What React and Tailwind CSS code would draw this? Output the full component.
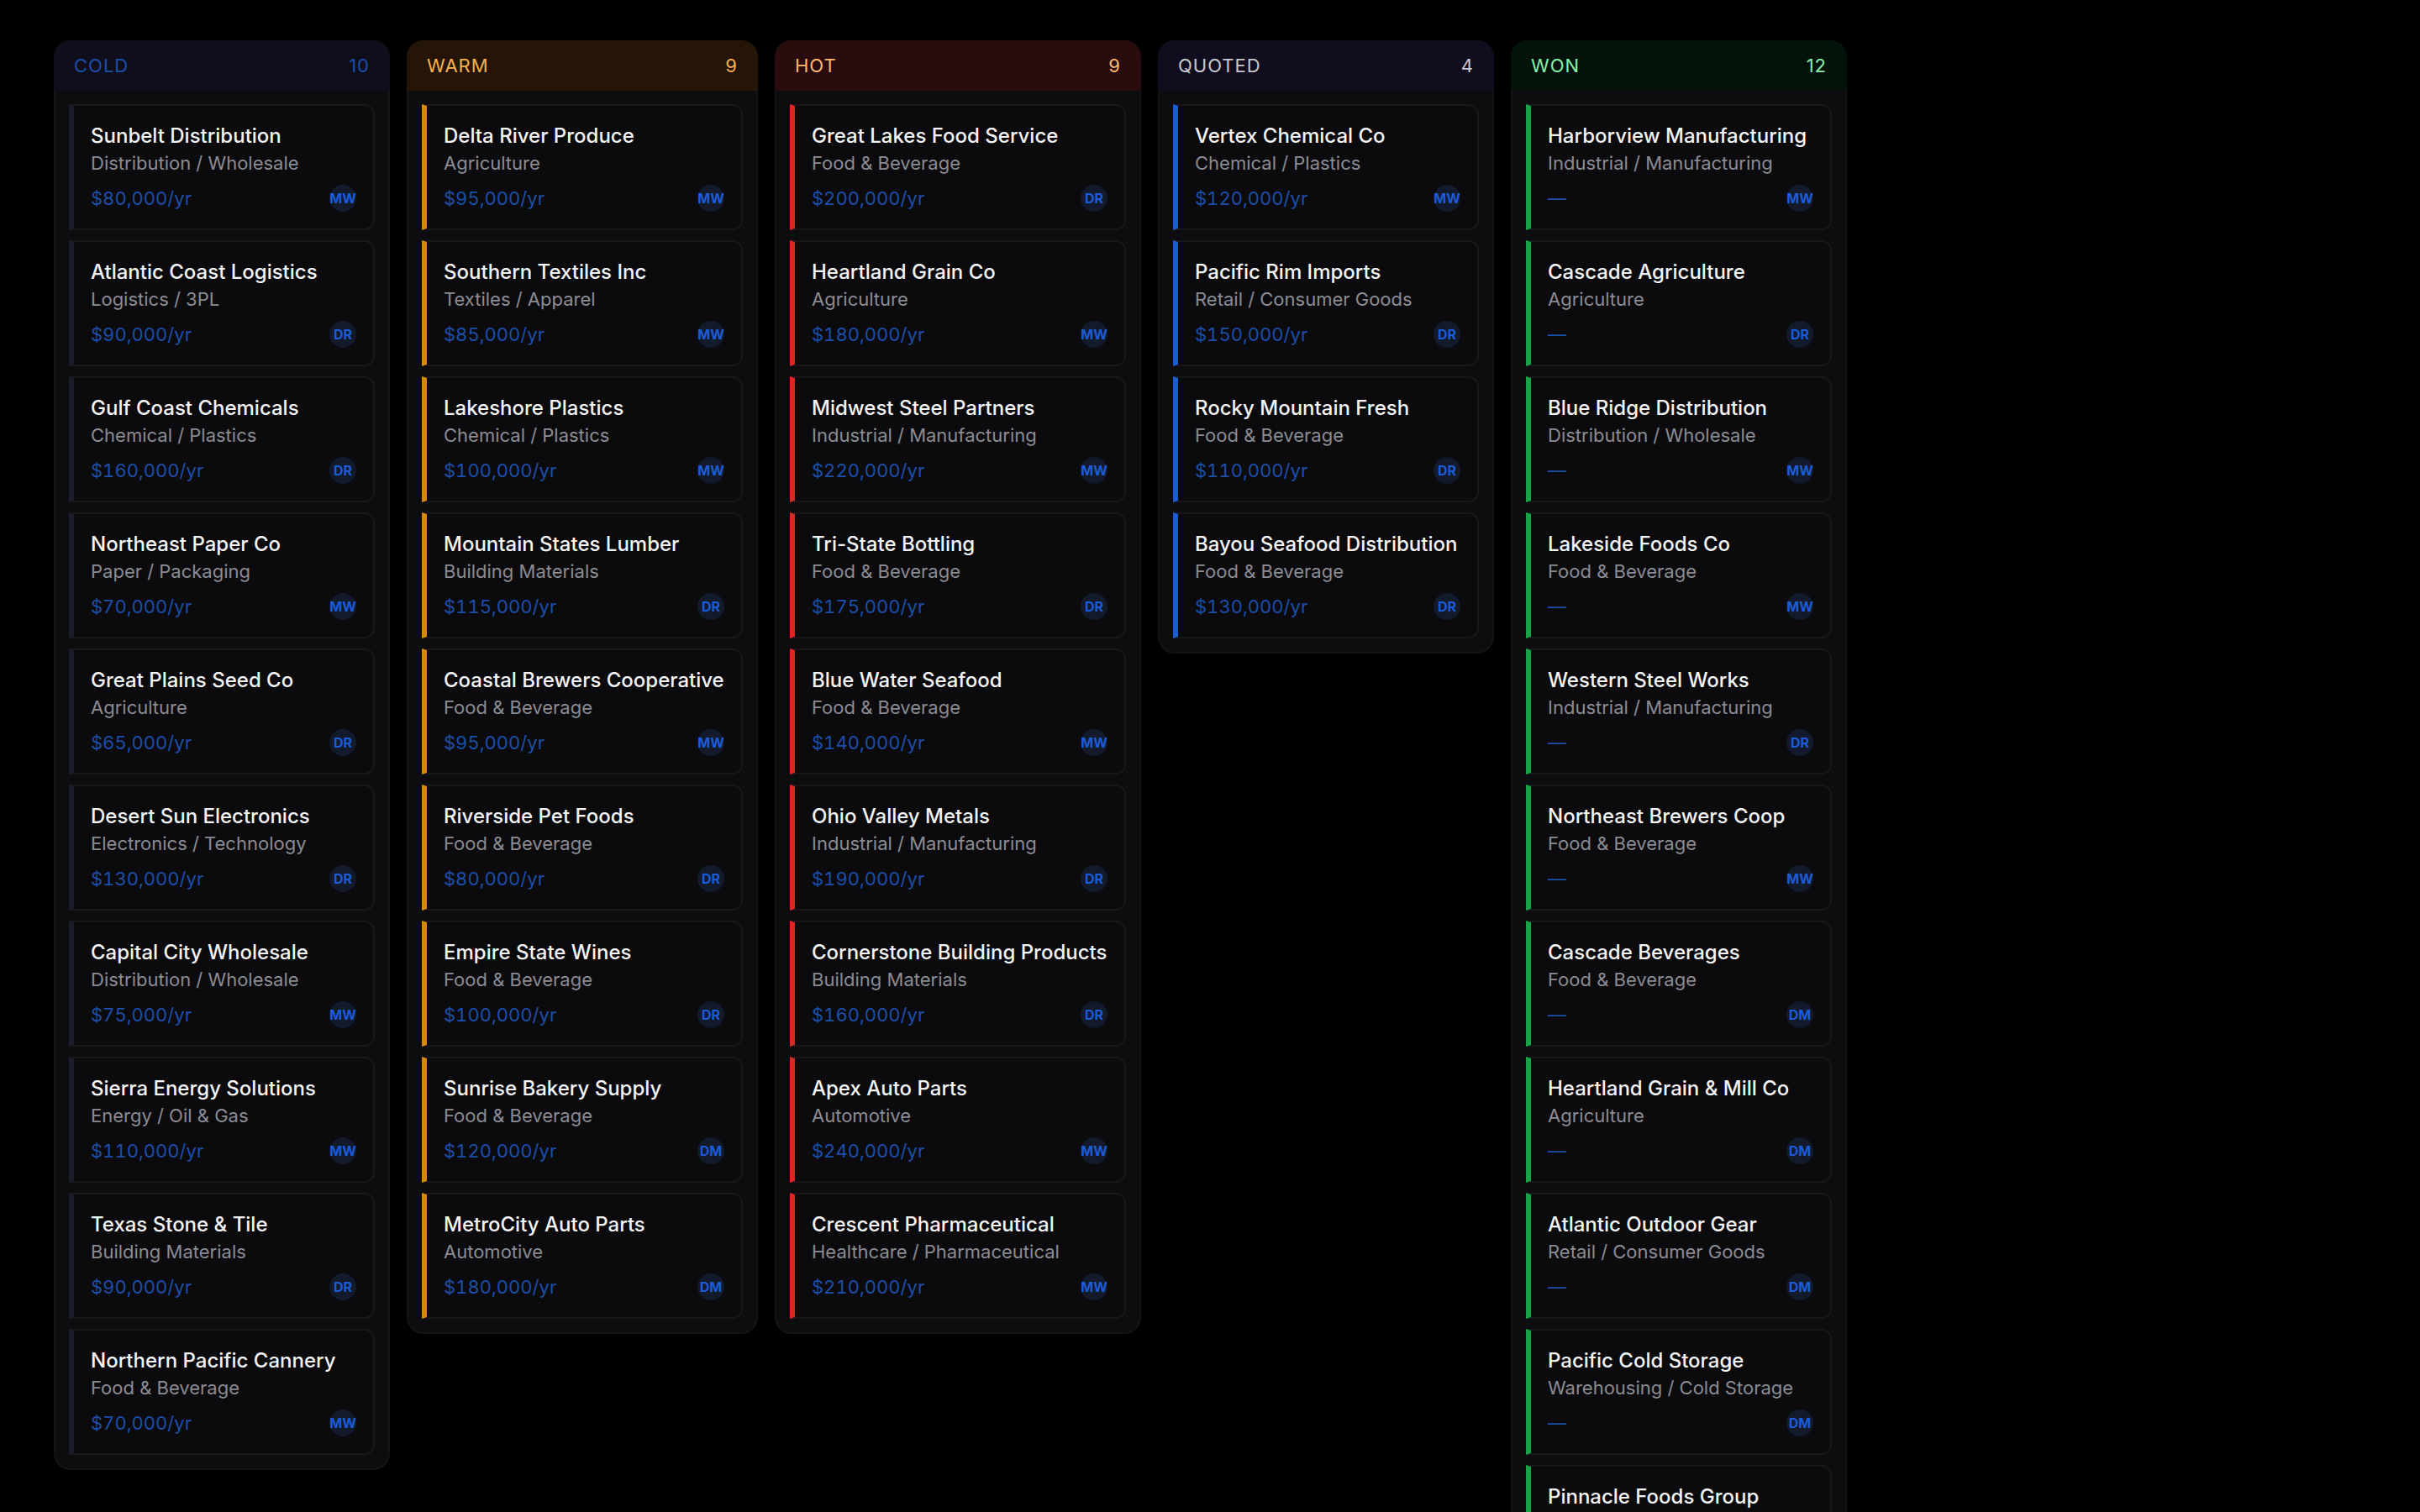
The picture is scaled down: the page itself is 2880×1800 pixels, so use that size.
const cols = [
  {
    title: "COLD", count: 10, width: "w-[400px]", head: "bg-[#0e0e1d]", titleC: "text-[#1d4ea8]", bar: "border-l-[#1c1d2c]",
    cards: [
      ["Sunbelt Distribution", "Distribution / Wholesale", "$80,000/yr", "MW"],
      ["Atlantic Coast Logistics", "Logistics / 3PL", "$90,000/yr", "DR"],
      ["Gulf Coast Chemicals", "Chemical / Plastics", "$160,000/yr", "DR"],
      ["Northeast Paper Co", "Paper / Packaging", "$70,000/yr", "MW"],
      ["Great Plains Seed Co", "Agriculture", "$65,000/yr", "DR"],
      ["Desert Sun Electronics", "Electronics / Technology", "$130,000/yr", "DR"],
      ["Capital City Wholesale", "Distribution / Wholesale", "$75,000/yr", "MW"],
      ["Sierra Energy Solutions", "Energy / Oil & Gas", "$110,000/yr", "MW"],
      ["Texas Stone & Tile", "Building Materials", "$90,000/yr", "DR"],
      ["Northern Pacific Cannery", "Food & Beverage", "$70,000/yr", "MW"],
    ],
  },
  {
    title: "WARM", count: 9, width: "w-[418px]", head: "bg-[#241506]", titleC: "text-[#f7b04e]", bar: "border-l-[#d98706]",
    cards: [
      ["Delta River Produce", "Agriculture", "$95,000/yr", "MW"],
      ["Southern Textiles Inc", "Textiles / Apparel", "$85,000/yr", "MW"],
      ["Lakeshore Plastics", "Chemical / Plastics", "$100,000/yr", "MW"],
      ["Mountain States Lumber", "Building Materials", "$115,000/yr", "DR"],
      ["Coastal Brewers Cooperative", "Food & Beverage", "$95,000/yr", "MW"],
      ["Riverside Pet Foods", "Food & Beverage", "$80,000/yr", "DR"],
      ["Empire State Wines", "Food & Beverage", "$100,000/yr", "DR"],
      ["Sunrise Bakery Supply", "Food & Beverage", "$120,000/yr", "DM"],
      ["MetroCity Auto Parts", "Automotive", "$180,000/yr", "DM"],
    ],
  },
  {
    title: "HOT", count: 9, width: "w-[436px]", head: "bg-[#2a0c0e]", titleC: "text-[#fbb872]", bar: "border-l-[#dc2626]",
    cards: [
      ["Great Lakes Food Service", "Food & Beverage", "$200,000/yr", "DR"],
      ["Heartland Grain Co", "Agriculture", "$180,000/yr", "MW"],
      ["Midwest Steel Partners", "Industrial / Manufacturing", "$220,000/yr", "MW"],
      ["Tri-State Bottling", "Food & Beverage", "$175,000/yr", "DR"],
      ["Blue Water Seafood", "Food & Beverage", "$140,000/yr", "MW"],
      ["Ohio Valley Metals", "Industrial / Manufacturing", "$190,000/yr", "DR"],
      ["Cornerstone Building Products", "Building Materials", "$160,000/yr", "DR"],
      ["Apex Auto Parts", "Automotive", "$240,000/yr", "MW"],
      ["Crescent Pharmaceutical", "Healthcare / Pharmaceutical", "$210,000/yr", "MW"],
    ],
  },
  {
    title: "QUOTED", count: 4, width: "w-[400px]", head: "bg-[#100d1e]", titleC: "text-[#c8c8d0]", bar: "border-l-[#1d5cd8]",
    cards: [
      ["Vertex Chemical Co", "Chemical / Plastics", "$120,000/yr", "MW"],
      ["Pacific Rim Imports", "Retail / Consumer Goods", "$150,000/yr", "DR"],
      ["Rocky Mountain Fresh", "Food & Beverage", "$110,000/yr", "DR"],
      ["Bayou Seafood Distribution", "Food & Beverage", "$130,000/yr", "DR"],
    ],
  },
  {
    title: "WON", count: 12, width: "w-[400px]", head: "bg-[#04130a]", titleC: "text-[#86efac]", bar: "border-l-[#16a34a]",
    cards: [
      ["Harborview Manufacturing", "Industrial / Manufacturing", "—", "MW"],
      ["Cascade Agriculture", "Agriculture", "—", "DR"],
      ["Blue Ridge Distribution", "Distribution / Wholesale", "—", "MW"],
      ["Lakeside Foods Co", "Food & Beverage", "—", "MW"],
      ["Western Steel Works", "Industrial / Manufacturing", "—", "DR"],
      ["Northeast Brewers Coop", "Food & Beverage", "—", "MW"],
      ["Cascade Beverages", "Food & Beverage", "—", "DM"],
      ["Heartland Grain & Mill Co", "Agriculture", "—", "DM"],
      ["Atlantic Outdoor Gear", "Retail / Consumer Goods", "—", "DM"],
      ["Pacific Cold Storage", "Warehousing / Cold Storage", "—", "DM"],
      ["Pinnacle Foods Group", "Food & Beverage", "—", "MW"],
    ],
  },
];

function Card({ c, bar }) {
  return (
    <div className={`rounded-r-[12px] border-2 border-l-[6px] border-[#18181b] ${bar} bg-[#0b0b0e] p-[20px]`}>
      <div className="text-[24px] leading-[32px] font-medium text-[#f4f4f5] whitespace-nowrap">{c[0]}</div>
      <div className="text-[22px] leading-[32px] text-[#8b8b93] whitespace-nowrap">{c[1]}</div>
      <div className="mt-[10px] flex items-center justify-between">
        <span className="text-[22px] leading-[32px] tabular-nums text-[#1d4ea8] whitespace-nowrap">{c[2]}</span>
        <span className="w-[32px] h-[32px] rounded-full bg-[#121a2c] text-[#1d5cd8] text-[16px] font-bold flex items-center justify-center">{c[3]}</span>
      </div>
    </div>
  );
}

export default function App() {
  return (
    <div className="h-screen overflow-hidden bg-black pt-[48px] pl-[64px] flex items-start gap-[20px] font-['Inter',sans-serif]">
      {cols.map((col) => (
        <section key={col.title} className={`${col.width} shrink-0 rounded-[20px] border-2 border-[#141417] bg-[#0d0d10]`}>
          <header className={`-m-[2px] mb-0 h-[60px] rounded-t-[20px] px-[24px] flex items-center justify-between text-[22px] tracking-[1px] font-normal ${col.titleC} ${col.head}`}>
            <span>{col.title}</span>
            <span>{col.count}</span>
          </header>
          <div className="p-[16px] flex flex-col gap-[12px]">
            {col.cards.map((c) => (
              <Card key={c[0]} c={c} bar={col.bar} />
            ))}
          </div>
        </section>
      ))}
    </div>
  );
}
